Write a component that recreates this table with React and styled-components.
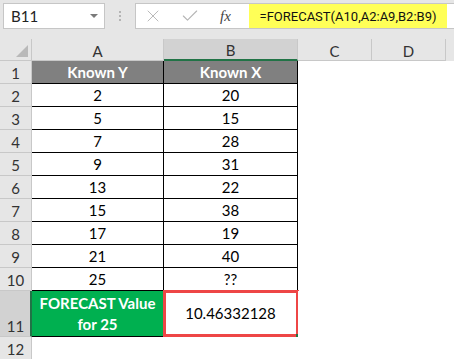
import React from "react";
import styled, { createGlobalStyle } from "styled-components";
import { X, Check } from "lucide-react";

const Global = createGlobalStyle`
  html, body {
    margin: 0;
    padding: 0;
    background: #ffffff;
  }
  body {
    font-family: Lato, "Liberation Sans", sans-serif;
  }
  * { box-sizing: border-box; }
`;

const Page = styled.div`
  width: 454px;
  height: 359px;
  overflow: hidden;
  background: #e6e6e6;
`;

const Toolbar = styled.div`
  height: 39px;
  display: flex;
  align-items: flex-start;
  padding: 3px 0 0 3px;
  background: #e6e6e6;
`;

const NameBox = styled.div`
  width: 102px;
  height: 26px;
  background: #fff;
  border: 1px solid #c6c6c6;
  display: flex;
  align-items: center;
  justify-content: space-between;
  padding: 0 6px 0 7px;
  font-size: 15px;
  color: #222;
  > .arrow {
    width: 0;
    height: 0;
    border-left: 4px solid transparent;
    border-right: 4px solid transparent;
    border-top: 4px solid #7a7a7a;
  }
`;

const Dots = styled.div`
  width: 30px;
  height: 26px;
  display: flex;
  flex-direction: column;
  align-items: center;
  justify-content: center;
  gap: 2px;
  > span {
    width: 2px;
    height: 2px;
    background: #b4b4b4;
  }
`;

const FormulaBox = styled.div`
  flex: 1;
  height: 26px;
  background: #fff;
  border: 1px solid #c6c6c6;
  border-right: none;
  display: flex;
  align-items: center;
  padding-left: 7px;
`;

const IconSlot = styled.div`
  width: ${(p) => p.w}px;
  flex-shrink: 0;
  display: flex;
  align-items: center;
  color: #b4b4b4;
  font-family: "Liberation Serif", serif;
  font-style: italic;
  font-size: 15px;
  > .fx { color: #444; margin-left: 3px; }
`;

const Formula = styled.div`
  flex-shrink: 0;
  width: 198px;
  height: 24px;
  background: #ffff57;
  display: flex;
  align-items: center;
  justify-content: center;
  white-space: nowrap;
  font-family: Roboto, "Liberation Sans", sans-serif;
  font-size: 13px;
  color: #111;
`;

const Sheet = styled.div`
  display: grid;
  grid-template-columns: 32px 132px 134px 74px 74px 1fr;
  grid-template-rows: 22px repeat(10, 23px) 46px 23px;
  background: #fff;
  font-size: 15px;
`;

const Corner = styled.div`
  background: #e6e6e6;
  border-right: 1px solid #c8c8c8;
  border-bottom: 1px solid #c8c8c8;
  position: relative;
  &::after {
    content: "";
    position: absolute;
    right: 3px;
    bottom: 3px;
    width: 0;
    height: 0;
    border-left: 12px solid transparent;
    border-bottom: 12px solid #b9b9b9;
  }
`;

const ColHead = styled.div`
  background: ${(p) => (p.active ? "#d2d2d2" : "#e6e6e6")};
  border-right: 1px solid #c8c8c8;
  border-bottom: ${(p) => (p.active ? "2px solid #217346" : "1px solid #c8c8c8")};
  display: flex;
  align-items: center;
  justify-content: center;
  color: #333;
  padding-top: 2px;
`;

const RowHead = styled.div`
  background: ${(p) => (p.active ? "#d2d2d2" : "#e6e6e6")};
  border-right: ${(p) => (p.active ? "2px solid #217346" : "1px solid #c8c8c8")};
  border-bottom: 1px solid #c8c8c8;
  display: flex;
  align-items: flex-end;
  justify-content: center;
  color: #333;
  padding-bottom: 1px;
  padding-left: ${(p) => (p.active ? "1px" : "0")};
`;

const Cell = styled.div`
  display: flex;
  align-items: center;
  justify-content: center;
  text-align: center;
  color: #000;
  line-height: 21px;
  border-right: ${(p) => (p.table ? "1px solid #000" : "none")};
  border-bottom: ${(p) => (p.table ? "1px solid #000" : "none")};
  background: ${(p) => p.bg || "#fff"};
  ${(p) => p.bold && "font-weight: 700; color: #fff;"}
  position: relative;
`;

const Selected = styled.div`
  position: absolute;
  left: -1px;
  top: -1px;
  right: -2px;
  bottom: -1px;
  border: 3px solid #ee4646;
  pointer-events: none;
  &::after {
    content: "";
    position: absolute;
    right: -4px;
    bottom: -4px;
    width: 4px;
    height: 4px;
    background: #217346;
  }
`;

const rows = [
  ["2", "20"],
  ["5", "15"],
  ["7", "28"],
  ["9", "31"],
  ["13", "22"],
  ["15", "38"],
  ["17", "19"],
  ["21", "40"],
  ["25", "??"],
];

const App = () => (
  <Page>
    <Global />
    <Toolbar>
      <NameBox>
        <span>B11</span>
        <span className="arrow" />
      </NameBox>
      <Dots>
        <span />
        <span />
        <span />
      </Dots>
      <FormulaBox>
        <IconSlot w={37}>
          <X size={20} strokeWidth={1.1} />
        </IconSlot>
        <IconSlot w={37}>
          <Check size={20} strokeWidth={1.3} />
        </IconSlot>
        <IconSlot w={32}>
          <span className="fx">fx</span>
        </IconSlot>
        <Formula>=FORECAST(A10,A2:A9,B2:B9)</Formula>
      </FormulaBox>
    </Toolbar>
    <Sheet>
      <Corner />
      <ColHead>A</ColHead>
      <ColHead active>B</ColHead>
      <ColHead>C</ColHead>
      <ColHead>D</ColHead>
      <Cell bg="#e6e6e6" />

      <RowHead>1</RowHead>
      <Cell table bold bg="#808080">Known Y</Cell>
      <Cell table bold bg="#808080">Known X</Cell>
      <Cell />
      <Cell />
      <Cell />

      {rows.map(([y, x], i) => (
        <React.Fragment key={i}>
          <RowHead>{i + 2}</RowHead>
          <Cell table>{y}</Cell>
          <Cell table>{x}</Cell>
          <Cell />
          <Cell />
          <Cell />
        </React.Fragment>
      ))}

      <RowHead active>11</RowHead>
      <Cell table bold bg="#00b050">
        FORECAST Value
        <br />
        for 25
      </Cell>
      <Cell table>
        10.46332128
        <Selected />
      </Cell>
      <Cell />
      <Cell />
      <Cell />

      <RowHead>12</RowHead>
      <Cell />
      <Cell />
      <Cell />
      <Cell />
      <Cell />
    </Sheet>
  </Page>
);

export default App;
